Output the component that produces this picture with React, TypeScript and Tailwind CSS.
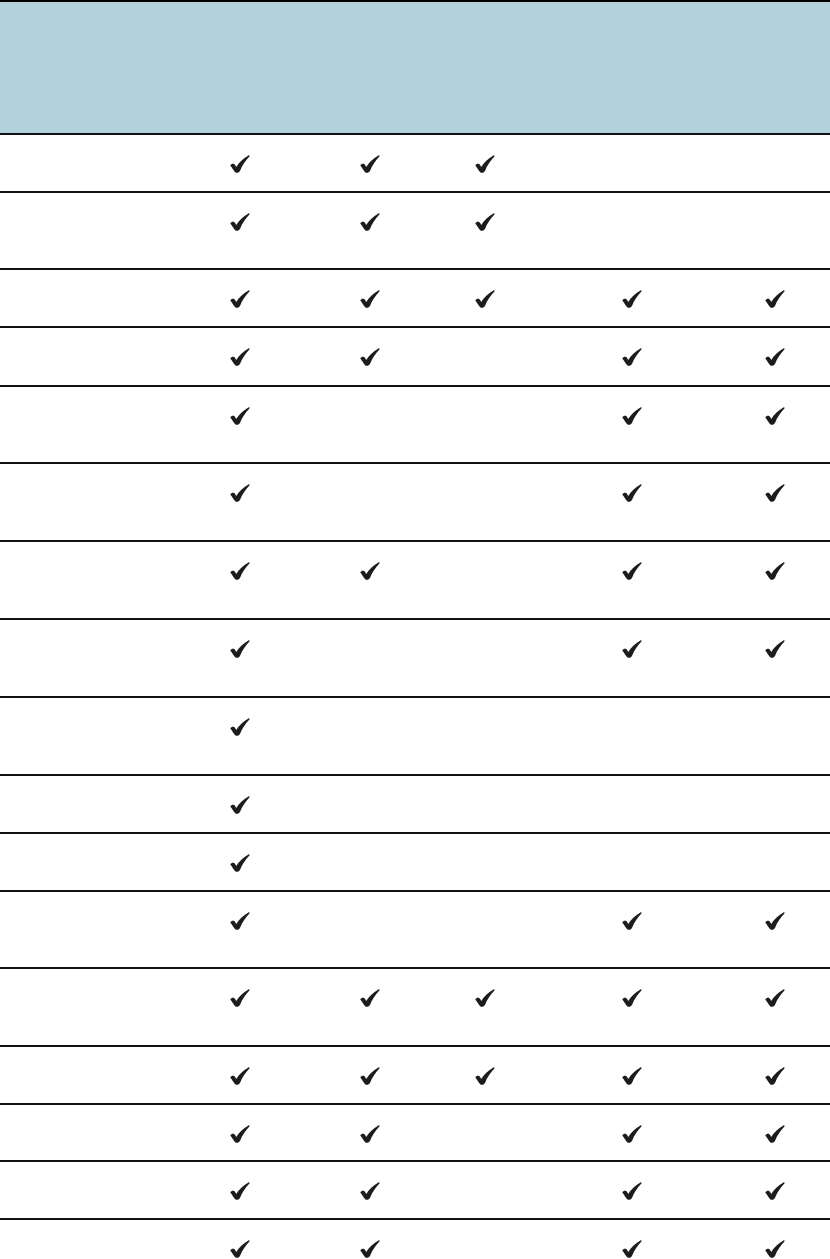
import React from "react";

const Check = () => (
  <svg width="20" height="18" viewBox="0 0 20 18" className="block">
    <path
      d="M0.3 10.6 C1.1 9 3.1 8.3 4.5 9.3 C5.2 9.9 5.7 10.9 6.2 11.9 C9 7.6 13 3.5 18.4 0.4 C19.3 -0.1 20 0.7 19.4 1.5 C15.4 5.6 12.2 10.4 10.1 15.7 C9.3 17.4 7 18.5 5.4 17.4 C3.8 15.9 2.1 13 0.3 10.6 Z"
      fill="#1c1c1c"
    />
  </svg>
);

type Row = { h: number; c: number[] };

const rows: Row[] = [
  { h: 58, c: [1, 1, 1, 0, 0] },
  { h: 77, c: [1, 1, 1, 0, 0] },
  { h: 58, c: [1, 1, 1, 1, 1] },
  { h: 59, c: [1, 1, 0, 1, 1] },
  { h: 77, c: [1, 0, 0, 1, 1] },
  { h: 78, c: [1, 0, 0, 1, 1] },
  { h: 78, c: [1, 1, 0, 1, 1] },
  { h: 78, c: [1, 0, 0, 1, 1] },
  { h: 78, c: [1, 0, 0, 0, 0] },
  { h: 58, c: [1, 0, 0, 0, 0] },
  { h: 58, c: [1, 0, 0, 0, 0] },
  { h: 77, c: [1, 0, 0, 1, 1] },
  { h: 78, c: [1, 1, 1, 1, 1] },
  { h: 58, c: [1, 1, 1, 1, 1] },
  { h: 57, c: [1, 1, 0, 1, 1] },
  { h: 58, c: [1, 1, 0, 1, 1] },
  { h: 58, c: [1, 1, 0, 1, 1] },
];

export default function App() {
  return (
    <div
      className="w-[830px] h-[1259px] overflow-hidden bg-white"
      style={{ fontFamily: '"Liberation Sans", Arial, sans-serif' }}
    >
      <div className="h-[133px] border-t-2 border-black bg-[#b3d1db]" />
      {rows.map((r, i) => (
        <div
          key={i}
          className="grid grid-cols-[175px_130px_130px_100px_194px_91px] border-t-2 border-[#111]"
          style={{ height: r.h }}
        >
          <div />
          {r.c.map((v, j) => (
            <div key={j} className="flex justify-center pt-[20px]">
              {v ? <Check /> : null}
            </div>
          ))}
        </div>
      ))}
    </div>
  );
}
